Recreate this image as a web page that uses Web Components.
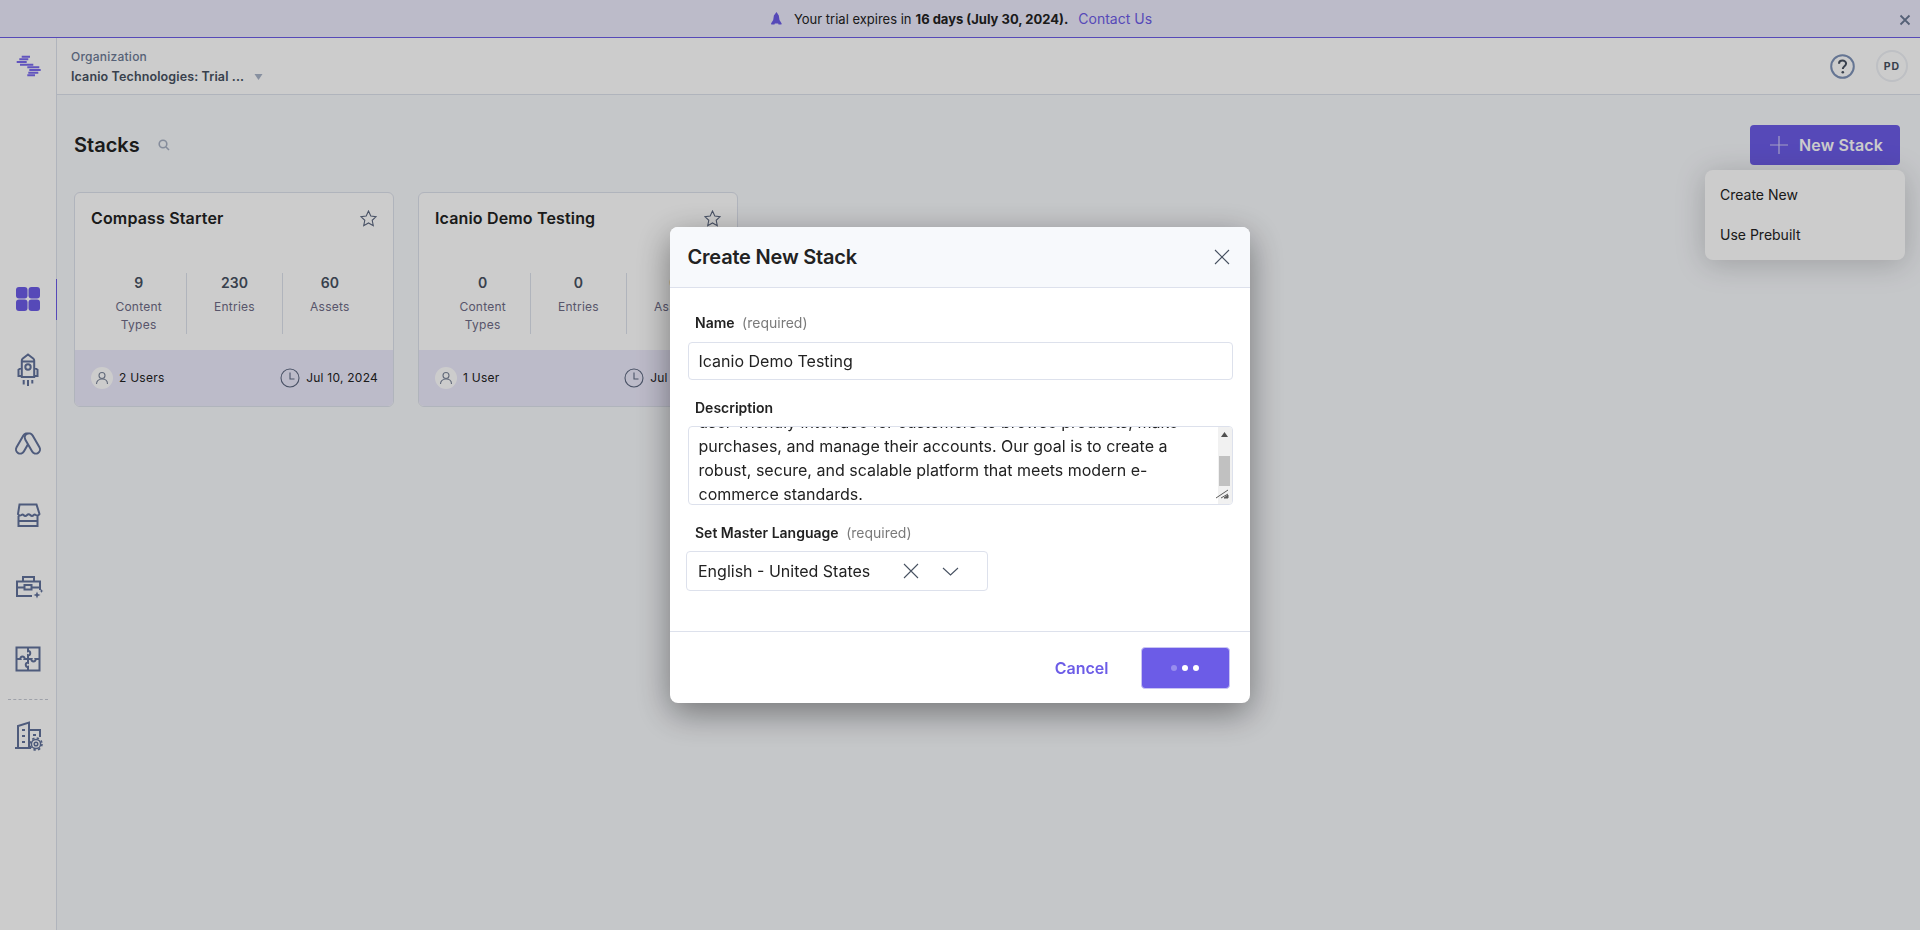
<!DOCTYPE html>
<html lang="en">
<head>
<meta charset="utf-8">
<title>Stacks</title>
<style>
	html, body { margin:0; height:100%; }
	body { font-family:Inter, "Liberation Sans", sans-serif; color:#222; background:#fff; overflow:hidden; }
	.page-row { display:flex; height:892px; }
	.page-col { flex:1; display:flex; flex-direction:column; min-width:0; }
</style>
</head>
<body>
	<trial-banner></trial-banner>
	<div class="page-row">
		<side-nav></side-nav>
		<div class="page-col">
			<org-header></org-header>
			<stacks-page>
				<stack-card name="Compass Starter" types="9" entries="230" assets="60" users="2 Users" date="Jul 10, 2024"></stack-card>
				<stack-card name="Icanio Demo Testing" types="0" entries="0" assets="0" users="1 User" date="Jul 10, 2024"></stack-card>
			</stacks-page>
		</div>
	</div>
	<modal-overlay>
		<create-stack-modal></create-stack-modal>
	</modal-overlay>

<script>
const ICON_STROKE='#62729b';

// sidebar icons, all 36x36
const NAV_ICONS={
	grid:`<g fill="#6c5ce7" stroke="none"><rect x="6" y="6" width="11.500" height="11.500" rx="3"/><rect x="18.500" y="6" width="11.500" height="11.500" rx="3"/><rect x="6" y="18.500" width="11.500" height="11.500" rx="3"/><rect x="18.500" y="18.500" width="11.500" height="11.500" rx="3"/></g>`,
	rocket:`<path d="M18 1.500l5.200 4q1 .8 1 2V24H11.800V7.500q0-1.200 1-2zM12 8.500h12M11.800 14.500l-3.300 2.300V23h3.300M24.200 14.500l3.300 2.300V23h-3.300M13.700 27v4.500M18 27v6M22.300 27v3.500"/><circle cx="18" cy="14" r="2.700"/>`,
	ads:`<rect x="-4.200" y="-11" width="8.400" height="22" rx="4.200" transform="translate(13.600 18.500) rotate(30)"/><rect x="-4.200" y="-11" width="8.400" height="22" rx="4.200" fill="#fff" transform="translate(22.400 18.500) rotate(-30)"/>`,
	store:`<path d="M9.500 7.500h17l3 9.500q-1.500 2.500-3.700 1-1.300-1.200-2.100 0-1.700 1.800-3.400 0-1.800-1.700-3.200 0-1.900 1.800-3.500 0-1-1.200-2.100 0-2.200 1.500-3.500-1zM8.500 19v10h19V19M8.500 24h19"/>`,
	briefcase:`<path d="M30 21v-8.500H7V27h15M13 12V8h11v4M7 18.500h7.500M21.500 18.500H30"/><rect x="14.500" y="16" width="7" height="4.500"/><path fill="${ICON_STROKE}" stroke="none" d="M27 22.500l1 2.500 2.500 1-2.500 1-1 2.500-1-2.500-2.500-1 2.500-1zM31.500 20l.6 1.400 1.400.6-1.400.6-.6 1.400-.6-1.400-1.400-.6 1.400-.6z"/>`,
	puzzle:`<rect x="6.500" y="6.500" width="23" height="23"/><path d="M6.500 18h4c-1-3.200 5-3.200 4 0H18v-3.800c3 1 3-5 0-4V6.500M18 18h3.500c-1 3.200 5 3.200 4 0h4M18 18v3.800c-3-1-3 5 0 4v3.700"/>`,
	building:`<path d="M5 30h16M8 30V8l11-3.500V30M19 12h11v7M12 12h3M12 18h3M12 24h3M23 17h3"/><g stroke-width="1.500"><circle cx="26" cy="26" r="1.800"/><circle cx="26" cy="26" r="4.600"/></g><circle cx="26" cy="26" r="6" stroke-width="1.600" stroke-dasharray="2.400 2.310"/>`
};

class TrialBanner extends HTMLElement {
	constructor() {
		super();
		this._shadowRoot=this.attachShadow({mode:'open'});
		this._shadowRoot.innerHTML=`
			<style>
				:host { display:block; height:37px; border-bottom:1px solid #6c5ce7; background:#eceafc; position:relative; font-size:13px; }
				.msg { height:37px; display:flex; align-items:center; justify-content:center; padding-left:3px; color:#222; }
				svg.rocket { margin-right:12px; }
				b { font-weight:700; margin:0 4px; }
				a { color:#6c5ce7; margin-left:6px; font-size:14px; }
				.close { position:absolute; right:9px; top:14px; }
			</style>
			<div class="msg">
				<svg class="rocket" width="11" height="13" viewBox="0 0 11 13"><path fill="#6c5ce7" d="M5.500 0l2.300 3.500.7 4.500 2.200 3.500-.3 1H7.500l-.3-1H3.800l-.3 1H.3l-.3-1L2.200 8l.7-4.500z"/></svg>
				<span>Your trial expires in</span><b>16 days (July 30, 2024).</b><a>Contact Us</a>
			</div>
			<svg class="close" width="12" height="12" viewBox="0 0 12 12"><path d="M1.500 1.500l9 9M10.500 1.500l-9 9" stroke="#6b7a94" stroke-width="1.800" fill="none"/></svg>`;
	}
}
customElements.define("trial-banner", TrialBanner);

class SideNav extends HTMLElement {
	constructor() {
		super();
		this._shadowRoot=this.attachShadow({mode:'open'});
		var items="";
		["grid","rocket","ads","store","briefcase","puzzle"].forEach((n,i) => {
			items+=`<div class="item${i==0?" active":""}"><svg width="36" height="36" viewBox="0 0 36 36" fill="none" stroke="${ICON_STROKE}" stroke-width="2">${NAV_ICONS[n]}</svg></div>`;
		});
		this._shadowRoot.innerHTML=`
			<style>
				:host { display:block; width:56px; flex:none; border-right:1px solid #dde1ec; background:#fff; position:relative; }
				.logo { display:block; margin:17px 0 0 16px; }
				nav { margin-top:186px; display:flex; flex-direction:column; }
				.item { height:72px; display:flex; align-items:center; justify-content:center; position:relative; }
				.active::after { content:""; position:absolute; right:-1px; top:16px; width:1px; height:41px; background:#6c5ce7; }
				.sep { border-top:1px dashed #c6cad4; margin:4px 8px 0 8px; }
			</style>
			<svg class="logo" width="26" height="22" viewBox="0 0 26 22" fill="none" stroke="#7a6aee" stroke-width="1.900">
				<path d="M5.700 1.700H14M3.300 4.300h9M.7 7h10M4 9.700h13.300M11.300 12.300h12M13.300 15h11.400M12.300 17.700h10M11.300 20.300H19"/>
			</svg>
			<nav>
				${items}
				<div class="sep"></div>
				<div class="item"><svg width="36" height="36" viewBox="0 0 36 36" fill="none" stroke="${ICON_STROKE}" stroke-width="2">${NAV_ICONS.building}</svg></div>
			</nav>`;
	}
}
customElements.define("side-nav", SideNav);

class OrgHeader extends HTMLElement {
	constructor() {
		super();
		this._shadowRoot=this.attachShadow({mode:'open'});
		this._shadowRoot.innerHTML=`
			<style>
				:host { display:flex; flex:none; height:56px; box-sizing:content-box; border-bottom:1px solid #dde1ec; background:#fff; align-items:center; padding:0 12px 0 14px; }
				.org { flex:1; padding-top:2px; }
				.label { font-size:12px; line-height:16px; font-weight:500; color:#6c7a95; letter-spacing:.02em; }
				.name { font-size:12.500px; line-height:18px; margin-top:3px; font-weight:600; color:#475161; display:flex; align-items:center; letter-spacing:.01em; }
				.name svg { margin-left:10px; }
				.help { margin-right:21px; display:block; }
				.avatar { width:28px; height:28px; border:2px solid #eef0f5; border-radius:50%; display:flex; align-items:center; justify-content:center; font-size:10.500px; font-weight:700; color:#475161; letter-spacing:1px; }
			</style>
			<div class="org">
				<div class="label">Organization</div>
				<div class="name">Icanio Technologies: Trial ...<svg width="9" height="6" viewBox="0 0 9 6"><path d="M.5 0h8L4.500 6z" fill="#a9b4c8"/></svg></div>
			</div>
			<svg class="help" width="25" height="25" viewBox="0 0 25 25">
				<circle cx="12.500" cy="12.500" r="11.300" fill="#fff" stroke="#7f93b8" stroke-width="2"/>
				<path d="M9 9.800c0-2 1.500-3.200 3.500-3.200s3.600 1.300 3.600 3c0 2.700-3.300 2.700-3.300 5.400" fill="none" stroke="#475161" stroke-width="2"/>
				<circle cx="12.800" cy="18.300" r="1.300" fill="#475161"/>
			</svg>
			<div class="avatar">PD</div>`;
	}
}
customElements.define("org-header", OrgHeader);

class StacksPage extends HTMLElement {
	constructor() {
		super();
		this._shadowRoot=this.attachShadow({mode:'open'});
		this._shadowRoot.innerHTML=`
			<style>
				:host { display:block; flex:1; background:#f7f9fc; padding:30px 20px 0 17px; }
				.top { display:flex; align-items:center; height:40px; position:relative; }
				h1 { margin:0; font-size:20px; font-weight:600; color:#222; line-height:40px; }
				.search { margin-left:18px; margin-right:auto; display:block; }
				button { font:600 16px Inter, "Liberation Sans", sans-serif; width:150px; height:40px; border:0; border-radius:4px; background:#6c5ce7; color:#fff; display:flex; align-items:center; padding:0 0 0 20px; letter-spacing:.01em; }
				button svg { margin-right:11px; }
				.menu { position:absolute; right:-5px; top:45px; width:200px; padding:5px 0; background:#fff; border-radius:8px; box-shadow:0 4px 30px rgba(34,34,34,.22); font-size:14px; color:#222; }
				.menu div { height:40px; line-height:40px; padding-left:15px; }
				.cards { display:flex; gap:24px; margin-top:27px; }
			</style>
			<div class="top">
				<h1>Stacks</h1>
				<svg class="search" width="12" height="12" viewBox="0 0 12 12" fill="none" stroke="#a7b0c2" stroke-width="1.600"><circle cx="5" cy="5" r="3.800"/><path d="M8 8l3 3"/></svg>
				<button><svg width="18" height="18" viewBox="0 0 18 18"><path d="M9 0v18M0 9h18" stroke="#cfc9f8" stroke-width="1.200"/></svg>New Stack</button>
				<div class="menu"><div>Create New</div><div>Use Prebuilt</div></div>
			</div>
			<div class="cards"><slot></slot></div>`;
	}
}
customElements.define("stacks-page", StacksPage);

class StackCard extends HTMLElement {
	constructor() {
		super();
		this._shadowRoot=this.attachShadow({mode:'open'});
	}

	connectedCallback() {
		var a=(n) => this.getAttribute(n);
		this._shadowRoot.innerHTML=`
			<style>
				:host { display:flex; flex-direction:column; width:320px; height:215px; box-sizing:border-box; border:1px solid #dde1ec; border-radius:6px; background:#fff; overflow:hidden; }
				.body { flex:1; padding:13px 16px 0 16px; }
				.title { display:flex; justify-content:space-between; align-items:center; height:24px; font-size:16px; font-weight:600; color:#222; letter-spacing:.01em; }
				.stats { display:grid; grid-template-columns:repeat(3,1fr); margin-top:43px; height:60px; }
				.stat { text-align:center; border-left:1px solid #dde1ec; }
				.stat:first-child { border-left:0; }
				.num { font-size:14px; line-height:20px; font-weight:600; color:#475161; }
				.lbl { font-size:12px; line-height:18px; margin-top:5px; color:#6e6b86; letter-spacing:.02em; padding:0 20px; }
				.foot { height:56px; flex:none; background:#eceafc; display:flex; align-items:center; padding:0 15px 1px 16px; box-sizing:border-box; font-size:12px; color:#222; letter-spacing:.02em; }
				.face { width:22px; height:22px; border-radius:50%; background:#fff; display:flex; align-items:center; justify-content:center; margin-right:6px; }
				.users { flex:1; }
				.clock { margin-right:6px; display:block; }
			</style>
			<div class="body">
				<div class="title"><span>${a("name")}</span>
					<svg width="17" height="17" viewBox="0 0 17 17" fill="none" stroke="#5d6880" stroke-width="1.100"><path d="M8.500 1l2.300 5 5.400.6-4 3.700 1.100 5.400-4.800-2.700-4.800 2.700 1.100-5.400-4-3.700 5.400-.6z"/></svg>
				</div>
				<div class="stats">
					<div class="stat"><div class="num">${a("types")}</div><div class="lbl">Content Types</div></div>
					<div class="stat"><div class="num">${a("entries")}</div><div class="lbl">Entries</div></div>
					<div class="stat"><div class="num">${a("assets")}</div><div class="lbl">Assets</div></div>
				</div>
			</div>
			<div class="foot">
				<div class="face"><svg width="14" height="14" viewBox="0 0 14 14" fill="none" stroke="#7b8599" stroke-width="1.100"><circle cx="7" cy="4.500" r="3"/><path d="M1.500 13c0-3 2.200-5 5.500-5s5.500 2 5.500 5"/></svg></div>
				<span class="users">${a("users")}</span>
				<svg class="clock" width="20" height="20" viewBox="0 0 20 20" fill="none" stroke="#5d6880" stroke-width="1.100"><circle cx="10" cy="10" r="9"/><path d="M10 4.500V11h4.500"/></svg>
				<span>${a("date")}</span>
			</div>`;
	}
}
customElements.define("stack-card", StackCard);

class ModalOverlay extends HTMLElement {
	constructor() {
		super();
		this._shadowRoot=this.attachShadow({mode:'open'});
		this._shadowRoot.innerHTML=`
			<style>
				:host { position:fixed; left:0; top:0; right:0; bottom:0; background:rgba(0,0,0,.2); display:flex; align-items:center; justify-content:center; }
			</style>
			<slot></slot>`;
	}
}
customElements.define("modal-overlay", ModalOverlay);

class FormField extends HTMLElement {
	constructor() {
		super();
		this._shadowRoot=this.attachShadow({mode:'open'});
	}

	connectedCallback() {
		var hint=this.getAttribute("hint");
		this._shadowRoot.innerHTML=`
			<style>
				:host { display:block; margin-top:18px; }
				:host(:first-child) { margin-top:0; }
				label { display:block; padding-left:7.500px; height:20px; line-height:20px; font-size:14px; font-weight:600; color:#222; margin-bottom:var(--label-gap,9px); }
				span { font-weight:400; color:#7a7a7a; margin-left:4px; }
			</style>
			<label>${this.getAttribute("label")}${hint?` <span>${hint}</span>`:""}</label>
			<slot></slot>`;
	}
}
customElements.define("form-field", FormField);

class TextBox extends HTMLElement {
	constructor() {
		super();
		this._shadowRoot=this.attachShadow({mode:'open'});
		this._shadowRoot.innerHTML=`
			<style>
				:host { display:flex; height:38px; box-sizing:border-box; border:1px solid #dde1ec; border-radius:4px; align-items:center; padding:0 10px; font-size:16px; color:#222; background:#fff; }
			</style>
			<slot></slot>`;
	}
}
customElements.define("text-box", TextBox);

class TextArea extends HTMLElement {
	constructor() {
		super();
		this._shadowRoot=this.attachShadow({mode:'open'});
		this._shadowRoot.innerHTML=`
			<style>
				:host { display:flex; height:79px; box-sizing:border-box; border:1px solid #dde1ec; border-radius:4px; background:#fff; overflow:hidden; position:relative; font-size:16px; line-height:24px; color:#222; }
				.text { flex:1; display:flex; flex-direction:column; justify-content:flex-end; padding:0 10px; margin-bottom:-2px; min-width:0; }
				.bar { width:14px; flex:none; background:#f1f1f1; display:flex; flex-direction:column; align-items:center; padding-top:5px; box-sizing:border-box; }
				.thumb { width:11px; height:30px; background:#c1c1c1; margin-top:19px; }
				.grip { position:absolute; right:3px; bottom:5px; }
			</style>
			<div class="text"><slot></slot></div>
			<div class="bar">
				<svg width="7" height="5" viewBox="0 0 7 5"><path d="M3.500 0L7 5H0z" fill="#505050"/></svg>
				<div class="thumb"></div>
			</div>
			<svg class="grip" width="14" height="10" viewBox="0 0 14 10" fill="none" stroke="#5a5a5a"><path d="M1 9l12-8M6 9l7-4"/><path d="M9 9l4-3v3z" fill="#5a5a5a"/></svg>`;
	}
}
customElements.define("text-area", TextArea);

class SelectBox extends HTMLElement {
	constructor() {
		super();
		this._shadowRoot=this.attachShadow({mode:'open'});
		this._shadowRoot.innerHTML=`
			<style>
				:host { display:flex; width:302px; height:40px; margin-left:-1.500px; box-sizing:border-box; border:1px solid #dde1ec; border-radius:4px; align-items:center; padding-left:11px; font-size:16px; color:#222; background:#fff; }
				.val { width:205px; }
				svg { display:block; }
				.clear { margin-right:23px; }
			</style>
			<div class="val"><slot></slot></div>
			<svg class="clear" width="16" height="16" viewBox="0 0 16 16"><path d="M1 1l14 14M15 1L1 15" stroke="#475161" stroke-width="1.100"/></svg>
			<svg width="17" height="9" viewBox="0 0 17 9"><path d="M1 1l7.500 7L16 1" fill="none" stroke="#475161" stroke-width="1.100"/></svg>`;
	}
}
customElements.define("select-box", SelectBox);

class CreateStackModal extends HTMLElement {
	constructor() {
		super();
		this._shadowRoot=this.attachShadow({mode:'open'});
		this._shadowRoot.innerHTML=`
			<style>
				:host { display:block; width:580px; border-radius:8px; background:#fff; box-shadow:0 10px 34px rgba(0,0,0,.42); overflow:hidden; }
				header { height:60px; background:#f7f9fc; border-bottom:1px solid #dde1ec; display:flex; align-items:center; justify-content:space-between; padding:0 20px 0 17.500px; }
				h2 { margin:0; font-size:20px; font-weight:600; color:#222; letter-spacing:-.01em; }
				.body { padding:25px 17.500px 40px; }
				footer { height:72px; box-sizing:border-box; border-top:1px solid #dde1ec; display:flex; align-items:center; justify-content:flex-end; padding:0 20.500px 0 0; }
				.cancel { color:#6c5ce7; font-size:16px; font-weight:600; margin-right:32px; }
				.load { width:89px; height:42px; box-sizing:border-box; background:#6c5ce7; border:1px solid #c9c4f3; border-radius:4px; display:flex; align-items:center; justify-content:center; gap:5px; }
				.load i { width:6px; height:6px; border-radius:50%; background:#fff; }
				.load i:first-child { opacity:.3; }
			</style>
			<header><h2>Create New Stack</h2>
				<svg width="16" height="16" viewBox="0 0 16 16"><path d="M1 1l14 14M15 1L1 15" stroke="#475161" stroke-width="1.100"/></svg>
			</header>
			<div class="body">
				<form-field label="Name" hint="(required)"><text-box>Icanio Demo Testing</text-box></form-field>
				<form-field label="Description" style="--label-gap:8px"><text-area>user-friendly interface for customers to browse products, make purchases, and manage their accounts. Our goal is to create a robust, secure, and scalable platform that meets modern e-commerce standards.</text-area></form-field>
				<form-field label="Set Master Language" hint="(required)" style="--label-gap:8px"><select-box>English - United States</select-box></form-field>
			</div>
			<footer><span class="cancel">Cancel</span><div class="load"><i></i><i></i><i></i></div></footer>`;
	}
}
customElements.define("create-stack-modal", CreateStackModal);
</script>
</body>
</html>
